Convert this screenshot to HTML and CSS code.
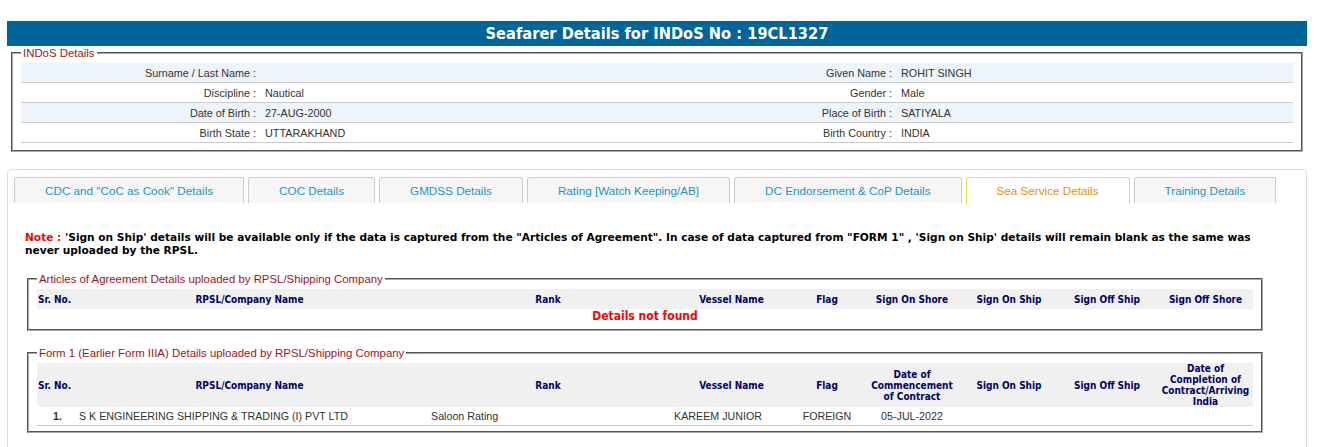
FILE: index.html
```html
<!DOCTYPE html>
<html>
<head>
<meta charset="utf-8">
<title>Seafarer Details</title>
<link rel="stylesheet" href="styles.css">
</head>
<body>
<div class="page">
  <div class="title">Seafarer Details for INDoS No : 19CL1327</div>

  <fieldset class="indos">
    <legend>INDoS Details</legend>
    <table class="info">
      <colgroup><col class="c-lbl"><col class="c-val"><col class="c-lbl"><col class="c-val"></colgroup>
      <tr class="alt"><td class="lbl">Surname / Last Name :</td><td class="val"></td><td class="lbl">Given Name :</td><td class="val">ROHIT SINGH</td></tr>
      <tr><td class="lbl">Discipline :</td><td class="val">Nautical</td><td class="lbl">Gender :</td><td class="val">Male</td></tr>
      <tr class="alt"><td class="lbl">Date of Birth :</td><td class="val">27-AUG-2000</td><td class="lbl">Place of Birth :</td><td class="val">SATIYALA</td></tr>
      <tr><td class="lbl">Birth State :</td><td class="val">UTTARAKHAND</td><td class="lbl">Birth Country :</td><td class="val">INDIA</td></tr>
    </table>
  </fieldset>

  <div class="tabs">
    <ul class="tabnav">
      <li class="tab">CDC and "CoC as Cook" Details</li>
      <li class="tab">COC Details</li>
      <li class="tab">GMDSS Details</li>
      <li class="tab">Rating [Watch Keeping/AB]</li>
      <li class="tab">DC Endorsement &amp; CoP Details</li>
      <li class="tab active">Sea Service Details</li>
      <li class="tab">Training Details</li>
    </ul>
    <div class="panel">
      <p class="note"><span class="note-lbl">Note :</span> 'Sign on Ship' details will be available only if the data is captured from the "Articles of Agreement". In case of data captured from "FORM 1" , 'Sign on Ship' details will remain blank as the same was never uploaded by the RPSL.</p>

      <fieldset class="sect">
        <legend>Articles of Agreement Details uploaded by RPSL/Shipping Company</legend>
        <table class="grid">
          <colgroup><col class="g1"><col class="g2"><col class="g3"><col class="g4"><col class="g5"><col class="g6"><col class="g7"><col class="g8"><col class="g9"></colgroup>
          <tr class="head">
            <th class="h-sr">Sr. No.</th><th>RPSL/Company Name</th><th>Rank</th><th>Vessel Name</th><th>Flag</th><th>Sign On Shore</th><th>Sign On Ship</th><th>Sign Off Ship</th><th>Sign Off Shore</th>
          </tr>
          <tr><td class="nf" colspan="9">Details not found</td></tr>
        </table>
      </fieldset>

      <fieldset class="sect">
        <legend>Form 1 (Earlier Form IIIA) Details uploaded by RPSL/Shipping Company</legend>
        <table class="grid">
          <colgroup><col class="g1"><col class="g2"><col class="g3"><col class="g4"><col class="g5"><col class="g6"><col class="g7"><col class="g8"><col class="g9"></colgroup>
          <tr class="head tall">
            <th class="h-sr">Sr. No.</th><th>RPSL/Company Name</th><th>Rank</th><th>Vessel Name</th><th>Flag</th><th>Date of<br>Commencement<br>of Contract</th><th>Sign On Ship</th><th>Sign Off Ship</th><th>Date of<br>Completion of<br>Contract/Arriving<br>India</th>
          </tr>
          <tr class="row">
            <td class="d-sr">1.</td><td class="d-left">S K ENGINEERING SHIPPING &amp; TRADING (I) PVT LTD</td><td class="d-rank">Saloon Rating</td><td class="d-vessel">KAREEM JUNIOR</td><td class="d-center">FOREIGN</td><td class="d-center">05-JUL-2022</td><td></td><td></td><td></td>
          </tr>
        </table>
      </fieldset>
    </div>
  </div>
</div>
</body>
</html>
```

FILE: styles.css
```css
html, body {
  margin: 0;
  padding: 0;
  background: #ffffff;
}
body {
  font-family: "Liberation Sans", Arial, sans-serif;
  font-size: 12px;
  color: #333333;
}
.page {
  width: 1300px;
  margin: 21px 0 0 7px;
}
.title {
  height: 25px;
  line-height: 25px;
  background: #006699;
  color: #ffffff;
  text-align: center;
  font-family: "DejaVu Sans Condensed", "DejaVu Sans", sans-serif;
  font-weight: bold;
  font-size: 16.3px;
}
fieldset {
  margin: 0;
  border: 2px groove #a8a8a8;
  min-width: 0;
}
legend {
  padding: 0 2px;
  font-family: "Liberation Sans", Arial, sans-serif;
  font-size: 11.4px;
  line-height: 14px;
  color: #a0141e;
}
.indos {
  margin: 0 4px;
  padding: 3px 8px 7px 8px;
}
table {
  border-collapse: collapse;
  border-spacing: 0;
  table-layout: fixed;
}
.info {
  width: 1272px;
}
.c-lbl { width: 238px; }
.c-val { width: 398px; }
.info td {
  height: 19px;
  padding: 0;
  border-bottom: 1px solid #cccccc;
  color: #333333;
  font-size: 10.8px;
  white-space: nowrap;
}
.info tr.alt td {
  background: #edf4fb;
}
.info td.lbl {
  text-align: right;
  padding-right: 3px;
}
.info td.val {
  text-align: left;
  padding-left: 6px;
}

.tabs {
  margin-top: 17px;
  border: 1px solid #dddddd;
  border-radius: 4px;
  padding-bottom: 30px;
}
.tabnav {
  list-style: none;
  margin: 0;
  padding: 7px 0 0 6px;
  display: flex;
}
.tab {
  height: 25px;
  line-height: 26px;
  padding: 0 30px;
  margin-right: 4px;
  border: 1px solid #cccccc;
  border-bottom: none;
  border-radius: 3px 3px 0 0;
  background: #f6f6f6;
  color: #1c94c4;
  font-size: 11.7px;
  white-space: nowrap;
}
.tab.active {
  background: #ffffff;
  border-color: #fbd850;
  color: #eb8f00;
  height: 26px;
  margin-bottom: -1px;
}
.panel {
  padding: 0 17px;
}
.note {
  max-width: 1250px;
  margin: 28px 0 0 0;
  font-family: "DejaVu Sans", Verdana, sans-serif;
  font-weight: bold;
  font-size: 10.6px;
  line-height: 13px;
  color: #000000;
}
.note-lbl {
  color: #ff0000;
}
.sect {
  width: 1236px;
  box-sizing: border-box;
  margin: 15px 0 0 2px;
  padding: 3px 8px 5px 8px;
}
.sect + .sect {
  margin-top: 15px;
}
.grid {
  width: 1216px;
}
.g1 { width: 37px; }
.g2 { width: 351px; }
.g3 { width: 246px; }
.g4 { width: 121px; }
.g5 { width: 70px; }
.g6 { width: 100px; }
.g7 { width: 94px; }
.g8 { width: 102px; }
.g9 { width: 95px; }
.grid th {
  height: 20px;
  padding: 0;
  background: #f0f0f0;
  font-family: "DejaVu Sans Condensed", "DejaVu Sans", sans-serif;
  font-weight: bold;
  font-size: 10px;
  line-height: 11px;
  color: #000066;
  text-align: center;
  vertical-align: middle;
  white-space: nowrap;
}
.grid tr.tall th {
  height: 44px;
}
.grid th.h-sr {
  text-align: left;
  padding-left: 1px;
}
.grid td.nf {
  padding: 0;
  height: 15px;
  line-height: 15px;
  text-align: center;
  font-family: "DejaVu Sans Condensed", "DejaVu Sans", sans-serif;
  font-weight: bold;
  font-size: 12px;
  color: #ff0000;
}
.grid tr.row td {
  height: 18px;
  padding: 0;
  border-bottom: 1px solid #cccccc;
  white-space: nowrap;
  color: #333333;
  font-size: 10.7px;
}
.grid tr.row td.d-sr {
  text-align: center;
  padding-left: 4px;
  font-weight: bold;
}
.grid tr.row td.d-left {
  padding-left: 5px;
}
.grid tr.row td.d-rank {
  padding-left: 6px;
}
.grid tr.row td.d-vessel {
  text-align: right;
  padding-right: 30px;
}
.grid tr.row td.d-center {
  text-align: center;
}
```
